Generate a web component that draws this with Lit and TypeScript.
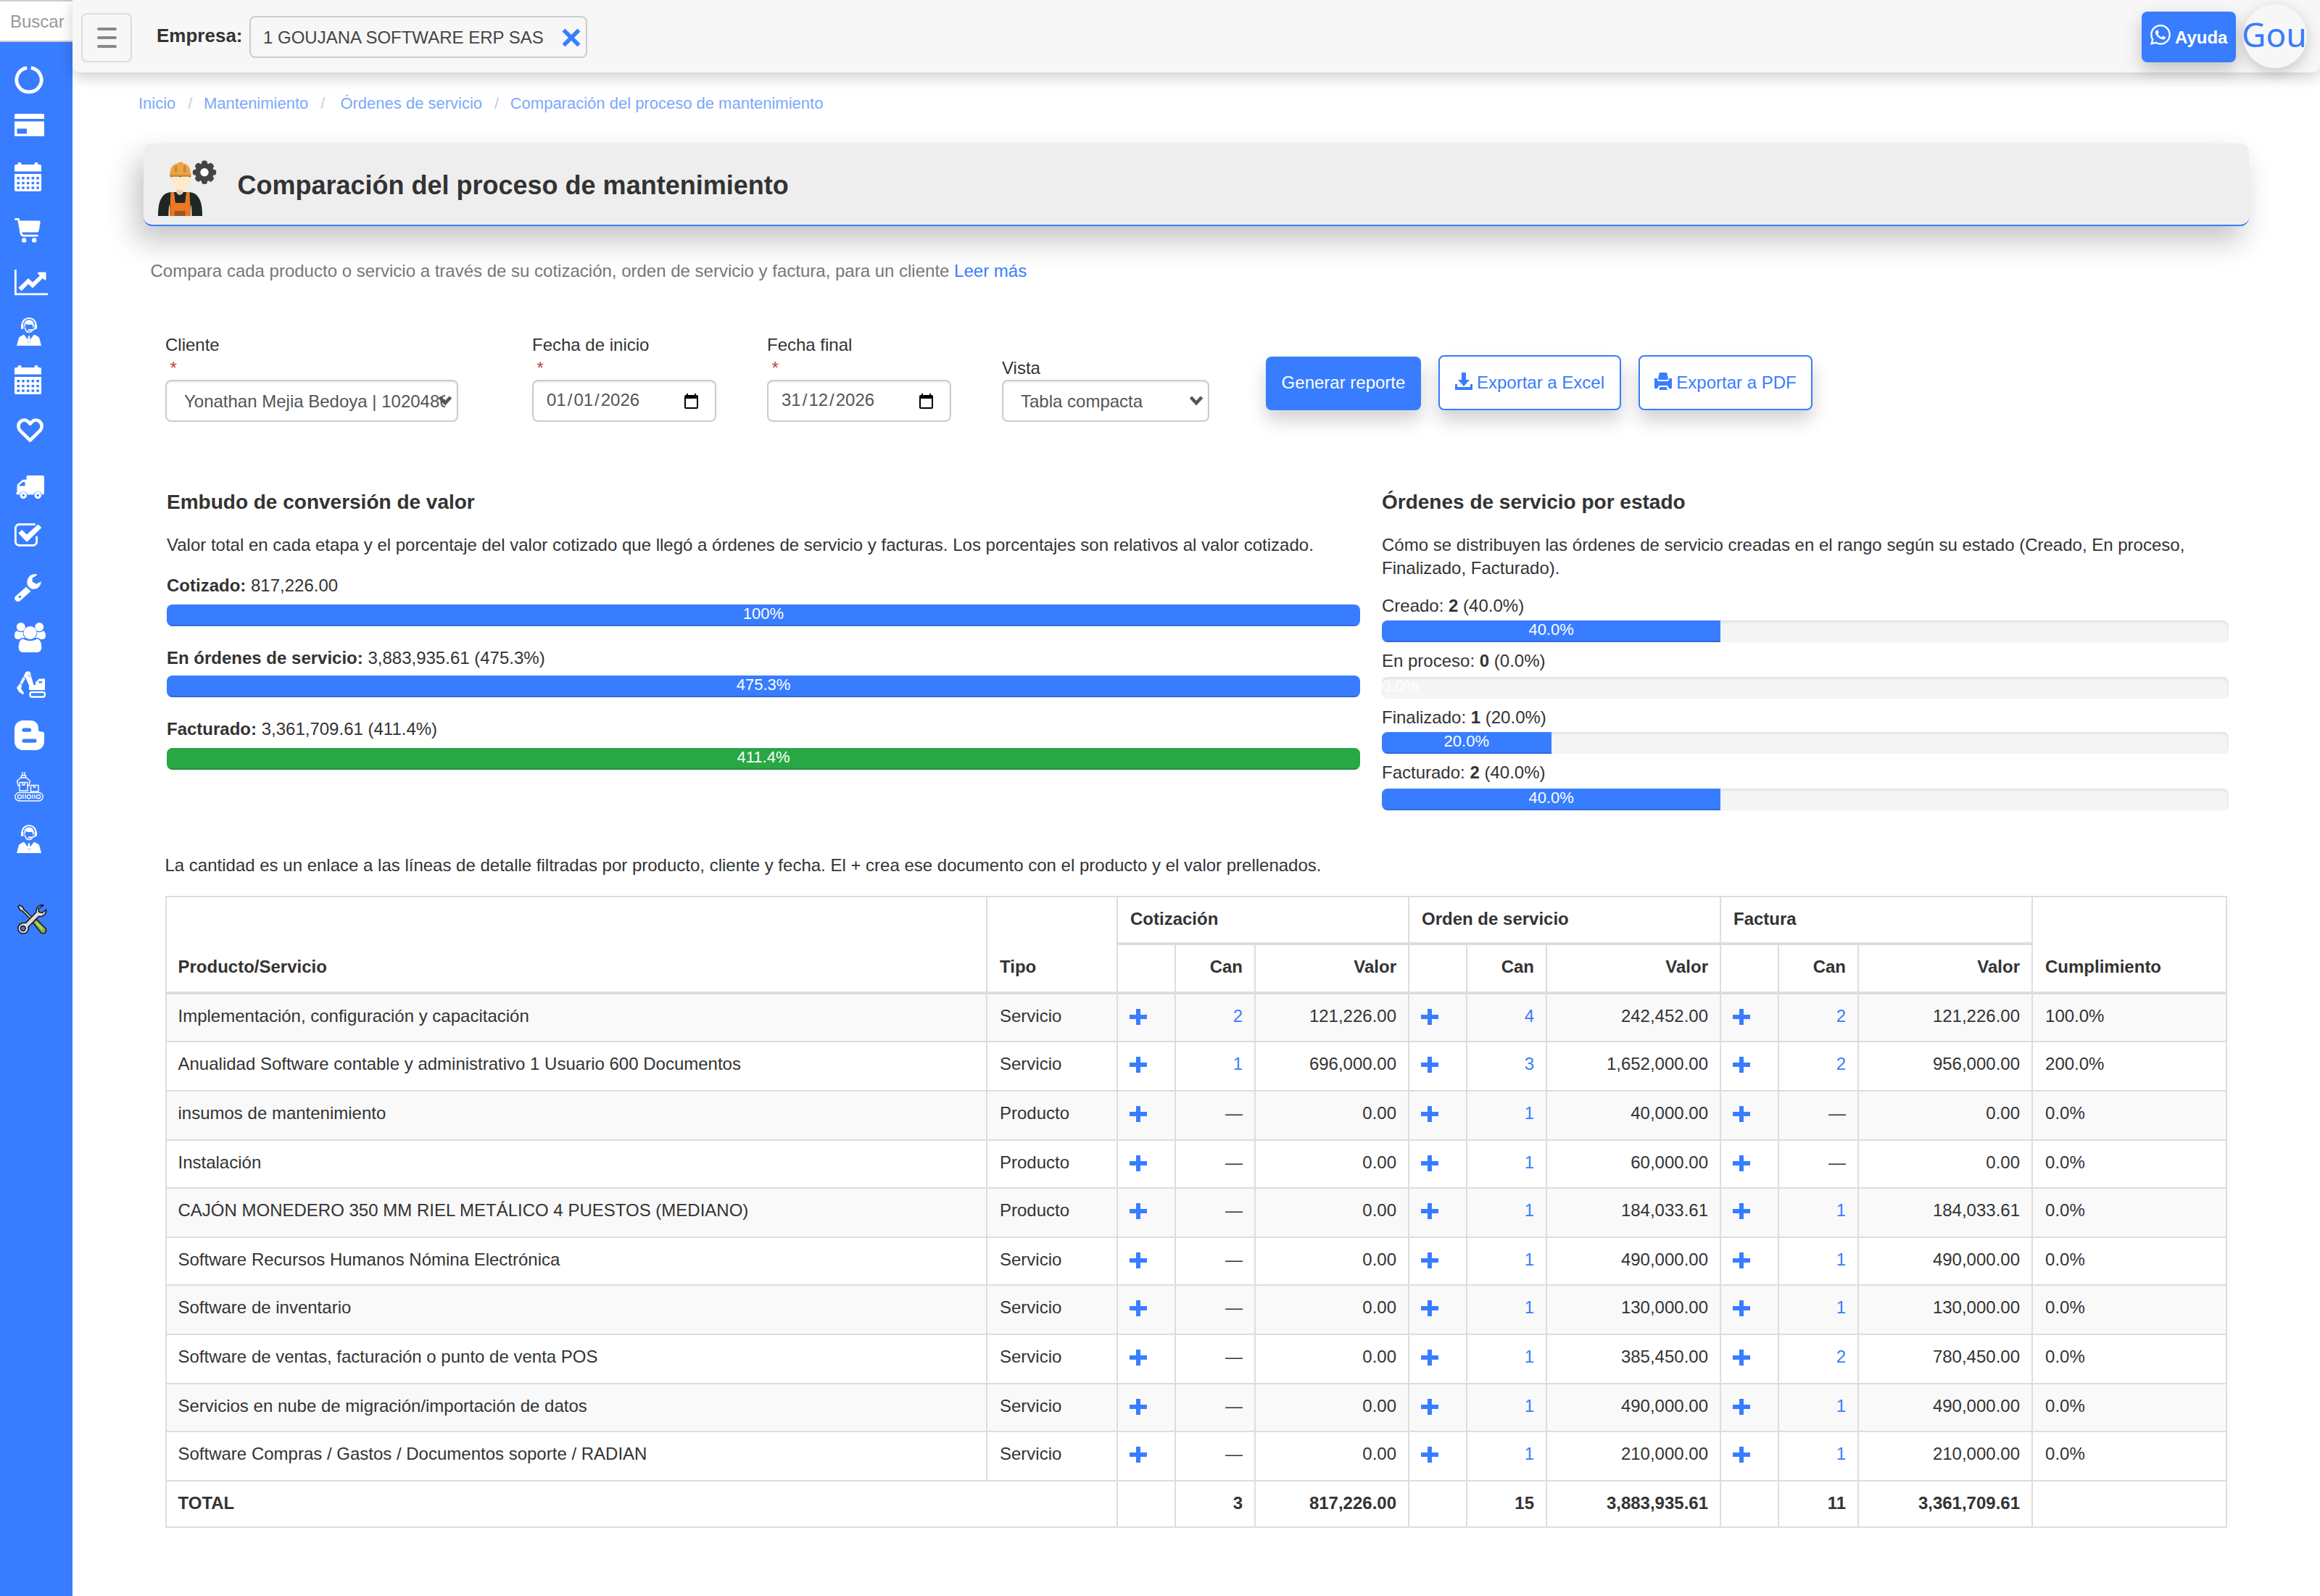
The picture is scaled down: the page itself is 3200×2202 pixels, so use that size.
import { LitElement, html, svg, css, nothing } from "lit";
import { customElement } from "lit/decorators.js";
import { classMap } from "lit/directives/class-map.js";

const agent = svg`
  <path fill="none" stroke="#fff" stroke-width="2" d="M7.500 11C7.500 4.500 12 1 17 1s9.500 3.500 9.500 10"/>
  <path fill="#fff" d="M10.500 9C11 5 13.500 3.500 17 3.500S23 5 23.500 9c.3 2 .2 5-.8 6.500-.2-2.500-.7-4.500-1.700-6-3 .9-6.500.6-8.500-.7-.6 2-1 4-1.100 6.500-1-1.800-1.200-4.300-.9-6.300z"/>
  <path fill="none" stroke="#fff" stroke-width="1.500" d="M11.300 14c.8 4.200 3 6.500 5.700 6.500 2.300 0 4.300-1.300 5.300-4M26 14c-.5 2.500-3 3.300-7 3.300"/>
  <rect fill="#fff" x="6" y="9" width="3.400" height="7" rx="1.600"/><rect fill="#fff" x="24.600" y="9" width="3.400" height="7" rx="1.600"/>
  <rect fill="#fff" x="15.500" y="16.200" width="4.500" height="2.400" rx="1.200"/>
  <path fill="#fff" d="M0 39 2.800 28.500C3.200 27 7 25 10 23.500L15.300 30.500 16 25.300h2l.7 5.200L24 23.500c3 1.500 6.800 3 7.200 4.800L34 39z"/>
  <path fill="#3a7dfc" d="M15.700 32h.6l-.3 5zM18 32h.6l-.3 5z"/>`;

const calendar = svg`
  <path fill="#fff" d="M2 3h2.500V2a2 2 0 0 1 2-2h1a2 2 0 0 1 2 2v1h18V2a2 2 0 0 1 2-2h1a2 2 0 0 1 2 2v1H35a2 2 0 0 1 2 2v7.500H0V5a2 2 0 0 1 2-2z"/>
  <path fill="#fff" fill-rule="evenodd" d="M0 16h37v22a2 2 0 0 1-2 2H2a2 2 0 0 1-2-2zM3.500 20v3.500h3.500V20zM10.200 20v3.500h3.500V20zM16.900 20v3.500h3.500V20zM23.600 20v3.500h3.500V20zM30.300 20v3.500h3.500V20zM3.500 27v3.300h3.500V27zM10.200 27v3.300h3.500V27zM16.900 27v3.300h3.500V27zM23.600 27v3.300h3.500V27zM30.300 27v3.300h3.500V27zM3.500 33.500v3.300h3.500v-3.300zM10.200 33.500v3.300h3.500v-3.300zM16.900 33.500v3.300h3.500v-3.300zM23.600 33.500v3.300h3.500v-3.300zM30.300 33.500v3.300h3.500v-3.300z"/>`;

interface NavIcon { name: string; w: number; h: number; inset?: number; art: unknown; }

const NAV: NavIcon[] = [
  { name: "Inicio", w: 40, h: 39, art: svg`<path fill="none" stroke="#fff" stroke-width="4.800" d="M17.200 2.700a17.200 16.700 0 1 0 5.600 0"/>` },
  { name: "Pagos", w: 41, h: 31, art: svg`<path fill="#fff" fill-rule="evenodd" d="M1.500 0h38A1.500 1.500 0 0 1 41 1.500V7H0V1.500A1.500 1.500 0 0 1 1.500 0zM0 10.500h41v19a1.500 1.500 0 0 1-1.500 1.500h-38A1.500 1.500 0 0 1 0 29.500zM3.500 20.500v7H17v-7z"/>` },
  { name: "Calendario", w: 37, h: 40, art: calendar },
  { name: "Compras", w: 36, h: 34, art: svg`<path fill="none" stroke="#fff" stroke-width="2.800" stroke-linecap="round" stroke-linejoin="round" d="M1.400 1.400H5.500L9 20.500c.4 2.500 1.200 3.600 3.200 3.600H31.500"/><path fill="#fff" d="M6 3.500h27.500c1.700 0 2.300 1 2.100 2.400L33.700 17c-.3 1.700-1 2.500-2.700 2.500H9.500z"/><circle fill="#fff" cx="13.200" cy="30.400" r="3.200"/><circle fill="#fff" cx="27.200" cy="30.400" r="3.200"/>` },
  { name: "Informes", w: 46, h: 36, art: svg`<path fill="none" stroke="#fff" stroke-width="2.800" d="M1.400 0v33.800H46"/><path fill="#fff" d="M5.500 25 19 12l6 5.500L35 8.300l-2.700-2.500C31.500 4.500 32 3.500 33.500 3.500H42c1 0 1.500.5 1.500 1.500v8c0 1.500-1.200 2-2.200 1L38.800 12 25 25.500 19 20 9.500 29.500z"/>` },
  { name: "Soporte", w: 34, h: 39, inset: 3, art: agent },
  { name: "Agenda", w: 37, h: 40, art: calendar },
  { name: "Favoritos", w: 37, h: 34, inset: 3, art: svg`<path fill="none" stroke="#fff" stroke-width="4.600" stroke-linejoin="round" d="M18.500 30.500 4.800 17.200C1.500 13.500 1.800 8 4.800 5 8.500 1.500 13 1.800 16 5l2.500 2.800L21 5c3-3.200 7.500-3.500 11.200 0 3 3 3.300 8.500 0 12.200z"/>` },
  { name: "Despachos", w: 39, h: 32, inset: 2, art: svg`<path fill="#fff" fill-rule="evenodd" d="M14.500 2A2 2 0 0 1 16.500 0H37a2 2 0 0 1 2 2v22.500a2 2 0 0 1-2 2h-1.200a5.800 5.800 0 0 0-11.200 0H15.800a5.800 5.800 0 0 0-11.200 0H2.500a2 2 0 0 1-2-1.500L0 24l1.500-.8V15c0-1.500.4-2.500 1.400-3.500l5-4.500C9 6 10 5.800 11.300 5.800h3.200zM4.500 14.500h8V9h-2.300c-.6 0-1 .2-1.400.6L5 13c-.4.400-.5.800-.5 1.500z"/><circle fill="none" stroke="#fff" stroke-width="3.200" cx="10.200" cy="27.400" r="3.200"/><circle fill="none" stroke="#fff" stroke-width="3.200" cx="30.200" cy="27.400" r="3.200"/>` },
  { name: "Tareas", w: 37, h: 32, art: svg`<path fill="none" stroke="#fff" stroke-width="2.800" stroke-linecap="round" d="M27.500 1.500H6.500A5 5 0 0 0 1.400 6.500V25.500A5 5 0 0 0 6.500 30.500H25.500A5 5 0 0 0 30.600 25.500V19"/><path fill="#fff" d="m6 13 3.300-3.300c.5-.5 1-.5 1.600 0L17 15.500 31.500 2.300c.6-.6 1.200-.6 1.800 0L36.500 5c.6.600.6 1.100 0 1.700L18 25c-.6.600-1.200.6-1.800 0L6 14.600c-.5-.6-.5-1.100 0-1.600z"/>` },
  { name: "Mantenimiento", w: 37, h: 38, art: svg`<path fill="#fff" fill-rule="evenodd" d="M1.500 30.500 16 17.700l6.500 6L8 36.700c-2.500 2-5 1.300-6.600-.4C-.5 34.500-.5 32.500 1.500 30.500zM7.300 29.800a1.700 1.700 0 1 0 .01 0z"/><path fill="#fff" d="M31.500 1.200 24.600 5.500v5l5.400 3.300 6.600-3.600c.4 5.500-4.200 10.500-10.400 10.500-1.500 0-2.700-.2-4-.8l-4-3.800C15.500 9 19.500 0 28 0c1.300 0 2.700.4 3.500 1.200z"/>` },
  { name: "Usuarios", w: 43, h: 41, art: svg`<g fill="#fff"><circle cx="8.800" cy="6" r="6"/><circle cx="34.200" cy="6" r="6"/><circle cx="21.500" cy="14" r="9"/><path d="M3.500 11.500c3 2 6.500 2.300 8.300 1C11.300 17 13 19.500 15 21H10c-1.500 1-2.500 2-4 2-4 0-6-1.500-6-4.500 0-3 .8-7 3.500-7zM39.500 11.500c-3 2-6.500 2.300-8.300 1 .5 4.500-1.200 7-3.200 8.500h5c1.500 1 2.500 2 4 2 4 0 6-1.500 6-4.500 0-3-.8-7-3.500-7z"/><path d="M12 22.500c5.500 3.600 13.500 3.600 19 0 5 .2 6.300 7 6.300 11.500 0 4.500-2.500 7-6.500 7H12.200c-4 0-6.500-2.500-6.500-7 0-4.500 1.300-11.300 6.300-11.500z"/></g>` },
  { name: "Maquinaria", w: 40, h: 37, inset: 3, art: svg`<path fill="#fff" d="M9.500 7 12.500 1l3-1 3.500 1.500.5 4L23.500 19H26v-4.500h2V12.500h2L30 10.500H39V26H19L17 26v-6.500L12.500 9.500 8 17l-2 7 4 6-1 2.500-6-4L0 23l3.500-5z"/><rect fill="none" stroke="#fff" stroke-width="2.400" x="18.500" y="29" width="20.300" height="6.500" rx="2.500"/><rect fill="#3a7dfc" x="30.500" y="14" width="4.500" height="2.400"/><path stroke="#3a7dfc" stroke-width="1" d="m9 8 4 2M15 5l4 3M4 17l5 2"/>` },
  { name: "Blog", w: 41, h: 41, art: svg`<path fill="#fff" fill-rule="evenodd" d="M12 0h10c6.500 0 11 4.500 11 11v1.500c0 2 .8 3 2.700 3H38c2 0 3 1 3 3V29c0 7-5 12-12 12H12C5 41 0 36 0 29V12C0 5 5 0 12 0zM13 10.500a2.600 2.600 0 0 0 0 5.200h7.500a2.600 2.600 0 0 0 0-5.200zM13 25.500a2.600 2.600 0 0 0 0 5.200h15a2.600 2.600 0 0 0 0-5.200z"/>` },
  { name: "Producción", w: 40, h: 41, art: svg`<g fill="none" stroke="#fff" stroke-width="1.400"><rect x=".8" y="28.500" width="38.400" height="11.500" rx="5.700"/><circle cx="7" cy="34.200" r="2.600"/><circle cx="20" cy="34.200" r="2.600"/><circle cx="33" cy="34.200" r="2.600"/><path d="M11 0v5h3V0M9.500 5h6v3h-6zM9.500 7 3.500 12.500 5 19l3-1M15.500 7l6 5.500L20 19l-3-1M7 14.500h11v11.500H7zM11 14.500v3.500h3v-3.500M22.500 18.500H33V27H22.500zM26.500 18.500v2.500h3M12 31v6M15 31v6M25 31v6M28 31v6"/></g>` },
  { name: "Clientes", w: 34, h: 40, inset: 3, art: agent },
  { name: "Herramientas", w: 41, h: 41, inset: 4, art: svg`<g stroke="#1b1b1b" stroke-width="1.600" stroke-linejoin="round"><path fill="#dcdcdc" d="M1 2.500 3.500.8 8 4l.7 2.700L24 21l-2.500 2.500L6.500 8.500 4 8z"/><path fill="#8db33b" d="m21 24.500 5-4.500 12.500 12.500c1.700 2.500 1 5-.5 6.500-1.500 1.300-3.500 1.300-5.500-.2z"/><path fill="#dcdcdc" d="M36 1c-5-1.500-11 3-10 9.500L11.500 25.500C5.500 24.500.8 28 .8 33c0 4 3 7 7.200 7 5 0 8-4 7-9L29.500 16.300C36 17.500 40.500 12 39.500 7l-5 4.500-5-1.300-.7-4.500z"/><circle fill="#3a7dfc" cx="7.700" cy="33" r="3.400"/><path fill="none" stroke="#d8e8a0" stroke-width="1.200" d="m26 25 8.500 9"/></g>` },
];

const WHATSAPP = "M13.601 2.326A7.854 7.854 0 0 0 7.994 0C3.627 0 .068 3.558.064 7.926c0 1.399.366 2.76 1.057 3.965L0 16l4.204-1.102a7.933 7.933 0 0 0 3.79.965h.004c4.368 0 7.926-3.558 7.93-7.93A7.898 7.898 0 0 0 13.6 2.326zM7.994 14.521a6.573 6.573 0 0 1-3.356-.92l-.24-.144-2.494.654.666-2.433-.156-.251a6.56 6.56 0 0 1-1.007-3.505c0-3.626 2.957-6.584 6.591-6.584a6.56 6.56 0 0 1 4.66 1.931 6.557 6.557 0 0 1 1.928 4.66c-.004 3.639-2.961 6.592-6.592 6.592zm3.615-4.934c-.197-.099-1.17-.578-1.353-.646-.182-.065-.315-.099-.445.099-.133.197-.513.646-.627.775-.114.133-.232.148-.43.05-.197-.1-.836-.308-1.592-.985-.59-.525-.985-1.175-1.103-1.372-.114-.198-.011-.304.088-.403.087-.088.197-.232.296-.346.1-.114.133-.198.198-.33.065-.134.034-.248-.015-.347-.05-.099-.445-1.076-.612-1.47-.16-.389-.323-.335-.445-.34-.114-.007-.247-.007-.38-.007a.729.729 0 0 0-.529.247c-.182.198-.691.677-.691 1.654 0 .977.71 1.916.81 2.049.098.133 1.394 2.132 3.383 2.992.47.205.84.326 1.129.418.475.152.904.129 1.246.08.38-.058 1.171-.48 1.338-.943.164-.464.164-.86.114-.993-.048-.13-.181-.197-.379-.296z";

interface Cell { qty: string; value: string; }
interface Row { name: string; kind: string; groups: Cell[]; done: string; }

const row = (name: string, kind: string, done: string, ...g: string[]): Row => ({
  name, kind, done,
  groups: [0, 2, 4].map((i) => ({ qty: g[i], value: g[i + 1] })),
});

const ROWS: Row[] = [
  row("Implementación, configuración y capacitación", "Servicio", "100.0%", "2", "121,226.00", "4", "242,452.00", "2", "121,226.00"),
  row("Anualidad Software contable y administrativo 1 Usuario 600 Documentos", "Servicio", "200.0%", "1", "696,000.00", "3", "1,652,000.00", "2", "956,000.00"),
  row("insumos de mantenimiento", "Producto", "0.0%", "—", "0.00", "1", "40,000.00", "—", "0.00"),
  row("Instalación", "Producto", "0.0%", "—", "0.00", "1", "60,000.00", "—", "0.00"),
  row("CAJÓN MONEDERO 350 MM RIEL METÁLICO 4 PUESTOS (MEDIANO)", "Producto", "0.0%", "—", "0.00", "1", "184,033.61", "1", "184,033.61"),
  row("Software Recursos Humanos Nómina Electrónica", "Servicio", "0.0%", "—", "0.00", "1", "490,000.00", "1", "490,000.00"),
  row("Software de inventario", "Servicio", "0.0%", "—", "0.00", "1", "130,000.00", "1", "130,000.00"),
  row("Software de ventas, facturación o punto de venta POS", "Servicio", "0.0%", "—", "0.00", "1", "385,450.00", "2", "780,450.00"),
  row("Servicios en nube de migración/importación de datos", "Servicio", "0.0%", "—", "0.00", "1", "490,000.00", "1", "490,000.00"),
  row("Software Compras / Gastos / Documentos soporte / RADIAN", "Servicio", "0.0%", "—", "0.00", "1", "210,000.00", "1", "210,000.00"),
];

const TOTALS: Cell[] = [
  { qty: "3", value: "817,226.00" },
  { qty: "15", value: "3,883,935.61" },
  { qty: "11", value: "3,361,709.61" },
];

const FUNNEL = [
  { label: "Cotizado:", detail: "817,226.00", pct: "100%", done: false },
  { label: "En órdenes de servicio:", detail: "3,883,935.61 (475.3%)", pct: "475.3%", done: false },
  { label: "Facturado:", detail: "3,361,709.61 (411.4%)", pct: "411.4%", done: true },
];

const STATES = [
  { label: "Creado:", count: 2, pct: 40 },
  { label: "En proceso:", count: 0, pct: 0 },
  { label: "Finalizado:", count: 1, pct: 20 },
  { label: "Facturado:", count: 2, pct: 40 },
];

@customElement("app-root")
export class AppRoot extends LitElement {
  static styles = css`
    :host { display: block; height: 2202px; overflow: hidden; background: #fff; color: #333;
      font: 24px/32px "Liberation Sans", Arial, sans-serif; }
    * { box-sizing: border-box; }
    svg { display: block; flex: none; }
    .shell { display: flex; height: 100%; }
    .side { width: 100px; flex: none; background: #387dff; }
    .search { height: 58px; overflow: hidden; padding: 12px 0 0 14px; background: #fff; color: #999;
      border: solid #ccc; border-width: 2px 0; white-space: nowrap; }
    .nav { display: grid; justify-items: start; align-items: start; padding: 33px 0 0 20px;
      grid-template-rows: 66px 67px 77px 71px 66px 66px 73px 79px 66px 70px 67px 67px 68px 71px 73px 110px 41px; }
    .inset2 { margin-left: 2px; }
    .inset3 { margin-left: 3px; }
    .inset4 { margin-left: 4px; }
    .page { flex: 1; min-width: 0; }
    .topbar { display: flex; align-items: flex-start; height: 100px; padding: 0 18px 0 12px; background: #f7f7f7;
      border-radius: 0 0 10px 10px; box-shadow: 0 6px 20px rgba(0,0,0,.2); }
    .burger { width: 70px; height: 68px; margin-top: 18px; border: 2px solid #ddd; border-radius: 8px;
      display: flex; flex-direction: column; align-items: center; justify-content: center; gap: 8px; }
    .burger i { width: 27px; height: 4px; border-radius: 2px; background: #888; }
    .company { margin: 33px 0 0 34px; font-size: 26px; font-weight: bold; width: 128px; }
    .picker { display: flex; justify-content: space-between; width: 466px; height: 58px; margin-top: 22px;
      padding: 12px 7px 0 17px; border: 2px solid #ccc; border-radius: 8px; color: #444; white-space: nowrap; }
    .picker svg { margin-top: 3px; }
    .help { display: flex; gap: 6px; width: 130px; height: 70px; margin: 16px 10px 0 auto; padding: 18px 0 0 12px; background: #387dff;
      color: #fff; font-weight: bold; border-radius: 8px; box-shadow: 0 10px 24px rgba(0,0,0,.22); }
    .help span { margin-top: 2px; }
    .avatar { width: 88px; height: 88px; margin-top: 6px; border-radius: 50%; background: #f7f7f7; color: #387dff;
      box-shadow: 0 6px 20px rgba(0,0,0,.2); font: 46px/82px "Noto Sans", sans-serif; text-indent: -2px; white-space: nowrap; }
    .crumbs { display: flex; margin: 27px 0 0 91px; font-size: 22px; color: #7ba9fb; }
    .crumbs i { font-style: normal; color: #ccc; margin: 0 15.500px 0 17px; }
    .crumbs .wide { margin-right: 21px; }
    .banner { display: flex; height: 114px; margin: 39px 98px 0; padding: 23px 0 0 20px; background: #eee;
      border-bottom: 2px solid #387dff; border-radius: 12px; box-shadow: -10px 20px 40px rgba(0,0,0,.24); }
    .banner h1 { margin: 13px 0 0 28.500px; font-size: 36px; line-height: 44px; }
    .intro { margin: 46px 0 0 107.500px; color: #777; }
    a { color: #387dff; text-decoration: none; }
    .filters { display: flex; align-items: flex-end; height: 122px; margin: 70px 0 0 128px; }
    .client { width: 404px; margin-right: 102px; }
    .date { width: 254px; margin-right: 70px; }
    .view { width: 286px; margin-right: 78px; }
    .req { color: #b94a48; padding-left: 6.500px; }
    .box { display: flex; align-items: center; height: 58px; border: 2px solid #ccc; border-radius: 8px; color: #555;
      box-shadow: inset 0 2px 2px rgba(0,0,0,.075); white-space: nowrap; }
    .select { padding: 0 7px 0 24px; }
    .select span { flex: 1; min-width: 0; overflow: hidden; margin-right: -9px; padding-top: 2px; }
    .select svg { margin-bottom: 1px; }
    .box.day { padding: 0 23px 0 16px; }
    .day span { padding: 0 2px; margin-top: -3px; }
    .day em { font-style: normal; margin-top: -3px; }
    .day svg { margin-left: auto; }
    .btn { display: flex; align-items: center; height: 74px; margin-bottom: 16px; border-radius: 8px; background: #387dff;
      color: #fff; width: 214px; justify-content: center; padding-bottom: 2px; box-shadow: 0 14px 24px rgba(0,0,0,.18); white-space: nowrap; }
    .line { height: 76px; padding-bottom: 0; background: #fff; color: #387dff; border: 2px solid #387dff; margin-left: 24px; width: 252px; gap: 6px; }
    .pdf { width: 240px; }
    .line svg { margin-top: -4px; }
    .charts { display: grid; grid-template-columns: 1646px 1168px; gap: 30px; height: 596px; padding: 91px 0 0 130px; }
    h2 { margin: 0 0 23px; font-size: 28px; line-height: 40px; }
    .charts p { margin: 0 0 24px; }
    .charts .states p { margin-bottom: 20px; }
    .bar { height: 30px; overflow: hidden; border-radius: 8px; background: #f5f5f5; box-shadow: inset 0 2px 4px rgba(0,0,0,.1); }
    .funnel .bar { margin: 10px 0 28px; }
    .funnel .second { margin: 8px 0 28px; }
    .states .bar { margin: 4px 0 10px; }
    .states .even { margin-top: 6px; }
    .fill { height: 100%; background: #387dff; color: #fff; font-size: 22px; line-height: 26px; text-align: center;
      box-shadow: inset 0 -2px 0 rgba(0,0,0,.15); }
    .green { background: #28a745; }
    .note { margin-left: 127.500px; }
    table { margin: 26px 0 0 128px; width: 2844px; table-layout: fixed; border-collapse: separate; border-spacing: 0;
      border: solid #ddd; border-width: 2px 0 0 2px; }
    th, td { padding: 14px 16px 0 17px; vertical-align: top; text-align: left; border: solid #ddd; border-width: 0 2px 2px 0; white-space: nowrap; }
    th.first, td.first { padding-left: 15.500px; }
    thead th { border-bottom-width: 4px; height: 68px; }
    thead th.span { height: 66px; }
    .tall { padding-top: 80px; }
    th.num, td.num { text-align: right; }
    tbody td { height: 68px; }
    .short td { height: 66px; }
    tbody tr:nth-child(odd) td { background: #f9f9f9; }
    tfoot td { height: 64px; font-weight: bold; }
    td svg { margin: 6px 0 0 -1px; }
    .c-name { width: 1132px; } .c-kind { width: 180px; } .c-add { width: 80px; } .c-qty { width: 110px; }
    .c-v1 { width: 212px; } .c-v2 { width: 240px; } .c-done { width: 268px; }
  `;

  private arrow = html`<svg width="18" height="14" viewBox="0 0 18 14"><path fill="none" stroke="#555" stroke-width="4.500" d="M1.500 2 9 10.200 16.500 2"/></svg>`;

  private renderDate(label: string, d: string, m: string, y: string) {
    return html`<div class="date">
      <div>${label}</div><div class="req">*</div>
      <div class="box day"><span>${d}</span><em>/</em><span>${m}</span><em>/</em><span>${y}</span>
        <svg width="19" height="21" viewBox="0 0 19 21"><path fill-rule="evenodd" d="M3 0h2v2h9V0h2v2h1a2 2 0 0 1 2 2v15a2 2 0 0 1-2 2H2a2 2 0 0 1-2-2V4a2 2 0 0 1 2-2h1zM2 7v12h15V7z"/></svg>
      </div>
    </div>`;
  }

  private renderQty(q: string) {
    return q === "—" ? q : html`<a href="#">${q}</a>`;
  }

  render() {
    const short = [0, 3, 5, 8];
    return html`<div class="shell">
      <aside class="side">
        <div class="search">Buscar</div>
        <nav class="nav">${NAV.map((n) => html`<svg aria-label=${n.name} class=${n.inset ? `inset${n.inset}` : nothing}
          width=${n.w} height=${n.h} viewBox="0 0 ${n.w} ${n.h}">${n.art}</svg>`)}</nav>
      </aside>
      <main class="page">
        <header class="topbar">
          <div class="burger"><i></i><i></i><i></i></div>
          <div class="company">Empresa:</div>
          <div class="picker"><span>1 GOUJANA SOFTWARE ERP SAS</span>
            <svg width="26" height="26" viewBox="0 0 26 26"><path stroke="#387dff" stroke-width="5.600" d="M2.500 2.500l21 21M23.500 2.500l-21 21"/></svg></div>
          <div class="help"><svg width="28" height="28" viewBox="0 0 16 16"><path fill="#fff" d=${WHATSAPP}/></svg><span>Ayuda</span></div>
          <div class="avatar">Gou</div>
        </header>
        <div class="crumbs"><span>Inicio</span><i>/</i><span>Mantenimiento</span><i class="wide">/</i><span>Órdenes de servicio</span><i>/</i><span>Comparación del proceso de mantenimiento</span></div>
        <section class="banner">
          <svg width="81" height="77" viewBox="0 0 81 77">
            <path fill="#1f2724" d="M0 77C0 66 1 55 7.500 48.500 11 45 16 44 20 44h21c4 0 9 1 12.500 4.500C60 55 61 66 61 77z"/>
            <path fill="#eee" d="M14.500 77c0-6 .2-11 1-16 .8 4 .8 10 .8 16zM44.700 77c0-6 0-12 .8-16 .8 5 1 10 1 16z"/>
            <path fill="#ed7723" d="M17.500 44h4.500l2 15h13l2-15h4.500L45 77H16z"/>
            <path fill="#1f2724" d="M22.500 44h16L37 58.500H24z"/>
            <path fill="#9c5a24" d="M22.700 70h15v7h-15z"/>
            <path fill="#dfcfb0" d="M25.500 38h9v6.500c-1 4.500-8 4.500-9 0z"/>
            <path fill="#ffe9c9" d="M17.500 20h27.300c1 10-4 21.500-13.600 21.500S16.500 30 17.500 20z"/>
            <path fill="#6b3f1d" d="M17.500 21.500h27.300v2.500l-2-1.500H32l-1.500 1.200-1-1.200h-10l-2 1.500z"/>
            <path fill="#eda446" d="M16.300 22v-2.500C17 10 20 5.500 27 4.500c1-2.800 7-2.800 8 0 7 1 9.500 6 10.500 15V22z"/>
            <path fill="#c98a35" d="M23 8.500c2-2 3.500-1.500 3.500 0V17h-3.500zM35 8.500c0-1.500 2-2 3.500 0V17H35zM16.300 20h29v1.800h-29z"/>
            <g fill="#444"><circle cx="64" cy="16.700" r="12.800"/><rect x="60" y=".5" width="8" height="32.400" rx="3.500"/><rect x="47.800" y="12.700" width="32.400" height="8" rx="3.500"/>
              <g transform="rotate(45 64 16.700)"><rect x="60" y=".8" width="8" height="31.800" rx="3"/><rect x="48.100" y="12.700" width="31.800" height="8" rx="3"/></g></g>
            <circle fill="#fff" cx="64" cy="16.700" r="5.700"/>
          </svg>
          <h1>Comparación del proceso de mantenimiento</h1>
        </section>
        <div class="intro">Compara cada producto o servicio a través de su cotización, orden de servicio y factura, para un cliente <a href="#">Leer más</a></div>
        <section class="filters">
          <div class="client"><div>Cliente</div><div class="req">*</div>
            <div class="box select"><span>Yonathan Mejia Bedoya | 1020486</span>${this.arrow}</div></div>
          ${this.renderDate("Fecha de inicio", "01", "01", "2026")}
          ${this.renderDate("Fecha final", "31", "12", "2026")}
          <div class="view"><div>Vista</div><div class="box select"><span>Tabla compacta</span>${this.arrow}</div></div>
          <div class="btn">Generar reporte</div>
          <div class="btn line"><svg width="24" height="24" viewBox="0 0 24 24"><path fill="#387dff" d="M9 0h6v10h5l-8 9-8-9h5zM0 16h3v4h18v-4h3v8H0z"/></svg>Exportar a Excel</div>
          <div class="btn line pdf"><svg width="24" height="24" viewBox="0 0 24 24"><path fill="#387dff" d="M7 0h10l2 8-1 2H6L5 8zM0 8h3.500l1.500 4h14l1.500-4H24v14h-4l-2-4H6l-2 4H0zM7.500 20h9l1.500 4H6z"/></svg>Exportar a PDF</div>
        </section>
        <section class="charts">
          <div class="funnel"><h2>Embudo de conversión de valor</h2>
            <p>Valor total en cada etapa y el porcentaje del valor cotizado que llegó a órdenes de servicio y facturas. Los porcentajes son relativos al valor cotizado.</p>
            ${FUNNEL.map((f, i) => html`<div><b>${f.label}</b> ${f.detail}</div>
              <div class=${classMap({ bar: true, second: i === 1 })}><div class=${classMap({ fill: true, green: f.done })}>${f.pct}</div></div>`)}
          </div>
          <div class="states"><h2>Órdenes de servicio por estado</h2>
            <p>Cómo se distribuyen las órdenes de servicio creadas en el rango según su estado (Creado, En proceso, Finalizado, Facturado).</p>
            ${STATES.map((s, i) => html`<div>${s.label} <b>${s.count}</b> (${s.pct.toFixed(1)}%)</div>
              <div class=${classMap({ bar: true, even: i % 2 === 1 })}><div class="fill" style="width:${s.pct}%">${s.pct.toFixed(1)}%</div></div>`)}
          </div>
        </section>
        <div class="note">La cantidad es un enlace a las líneas de detalle filtradas por producto, cliente y fecha. El + crea ese documento con el producto y el valor prellenados.</div>
        <table>
          <colgroup><col class="c-name"><col class="c-kind">
            <col class="c-add"><col class="c-qty"><col class="c-v1">
            <col class="c-add"><col class="c-qty"><col class="c-v2">
            <col class="c-add"><col class="c-qty"><col class="c-v2"><col class="c-done"></colgroup>
          <thead>
            <tr><th class="tall first" rowspan="2">Producto/Servicio</th><th class="tall" rowspan="2">Tipo</th>
              ${["Cotización", "Orden de servicio", "Factura"].map((t) => html`<th class="span" colspan="3">${t}</th>`)}
              <th class="tall" rowspan="2">Cumplimiento</th></tr>
            <tr>${[0, 1, 2].map(() => html`<th></th><th class="num">Can</th><th class="num">Valor</th>`)}</tr>
          </thead>
          <tbody>${ROWS.map((r, i) => html`<tr class=${short.includes(i) ? "short" : nothing}>
            <td class="first">${r.name}</td><td>${r.kind}</td>
            ${r.groups.map((g) => html`<td><svg width="24" height="22" viewBox="0 0 24 22"><path fill="#387dff" d="M9 0h6v8h9v6h-9v8H9v-8H0V8h9z"/></svg></td>
              <td class="num">${this.renderQty(g.qty)}</td><td class="num">${g.value}</td>`)}
            <td>${r.done}</td></tr>`)}</tbody>
          <tfoot><tr><td class="first" colspan="2">TOTAL</td>
            ${TOTALS.map((t) => html`<td></td><td class="num">${t.qty}</td><td class="num">${t.value}</td>`)}<td></td></tr></tfoot>
        </table>
      </main>
    </div>`;
  }
}
